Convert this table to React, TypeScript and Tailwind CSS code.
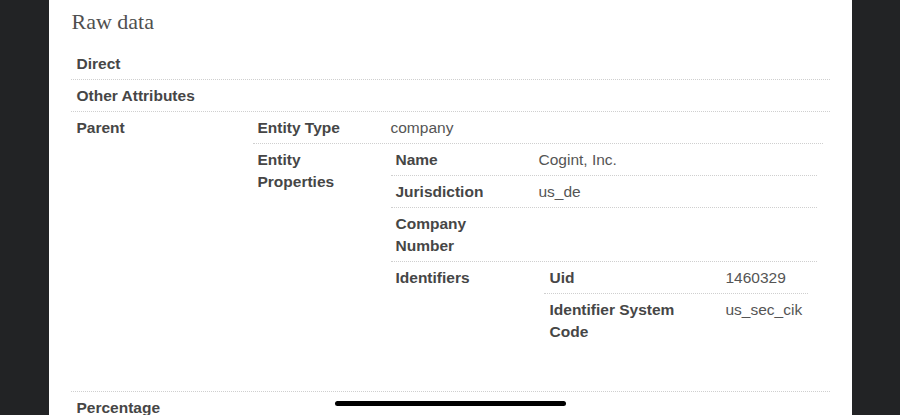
import React from "react";

const label = "font-bold text-[#464646]";
const value = "text-[#555]";
const line = "border-b border-dotted border-[#cfcfcf]";

type RowProps = {
  name: React.ReactNode;
  labelW: string;
  pad: string;
  children?: React.ReactNode;
  last?: boolean;
};

function Row({ name, labelW, pad, children, last }: RowProps) {
  return (
    <div className={`flex items-start ${last ? "" : line}`}>
      <div className={`${labelW} shrink-0 ${pad} pt-[5px] pb-[4px] ${label}`}>{name}</div>
      <div className="flex-1 min-w-0">{children}</div>
    </div>
  );
}

function Val({ children }: { children: React.ReactNode }) {
  return <div className={`pl-[6px] pt-[5px] pb-[4px] ${value}`}>{children}</div>;
}

export default function App() {
  return (
    <div className="relative h-[415px] w-[900px] overflow-hidden bg-[#222325] flex justify-center">
      <div
        className="w-[803px] h-full bg-white pl-[22px] pr-[22px] leading-[22px] text-[15.5px]"
        style={{ fontFamily: '"Liberation Sans", Arial, sans-serif' }}
      >
        <h1
          className="h-[48px] pt-[9px] pl-[1px] leading-[26px] text-[22px] text-[#4f4f4f]"
          style={{ fontFamily: '"Liberation Serif", "Times New Roman", serif' }}
        >
          Raw data
        </h1>

        <div className="w-[759px]">
          <Row name="Direct" labelW="w-[176px]" pad="pl-[6px]" />
          <Row name="Other Attributes" labelW="w-[176px]" pad="pl-[6px]" />
          <Row name="Parent" labelW="w-[176px]" pad="pl-[6px]">
            <div className="pl-[6px] pr-[7px]">
              <div className="mb-[15px]">
                <Row name="Entity Type" labelW="w-[132px]" pad="pl-[5px]">
                  <Val>company</Val>
                </Row>
                <Row
                  name={
                    <>
                      Entity
                      <br />
                      Properties
                    </>
                  }
                  labelW="w-[132px]"
                  pad="pl-[5px]"
                  last
                >
                  <div className="px-[6px]">
                    <div className="mb-[15px]">
                      <Row name="Name" labelW="w-[142px]" pad="pl-[5px]">
                        <Val>Cogint, Inc.</Val>
                      </Row>
                      <Row name="Jurisdiction" labelW="w-[142px]" pad="pl-[5px]">
                        <Val>us_de</Val>
                      </Row>
                      <Row
                        name={
                          <>
                            Company
                            <br />
                            Number
                          </>
                        }
                        labelW="w-[142px]"
                        pad="pl-[5px]"
                      />
                      <Row name="Identifiers" labelW="w-[142px]" pad="pl-[5px]" last>
                        <div className="pl-[11px] w-[275px] mb-[14px]">
                          <Row name="Uid" labelW="w-[176px]" pad="pl-[6px]">
                            <Val>1460329</Val>
                          </Row>
                          <Row
                            name={
                              <>
                                Identifier System
                                <br />
                                Code
                              </>
                            }
                            labelW="w-[176px]"
                            pad="pl-[6px]"
                            last
                          >
                            <Val>us_sec_cik</Val>
                          </Row>
                        </div>
                      </Row>
                    </div>
                  </div>
                </Row>
              </div>
            </div>
          </Row>
          <Row name="Percentage" labelW="w-[176px]" pad="pl-[6px]" />
        </div>
      </div>

      <div className="absolute left-[335px] top-[401px] h-[5px] w-[231px] rounded-full bg-black" />
    </div>
  );
}
